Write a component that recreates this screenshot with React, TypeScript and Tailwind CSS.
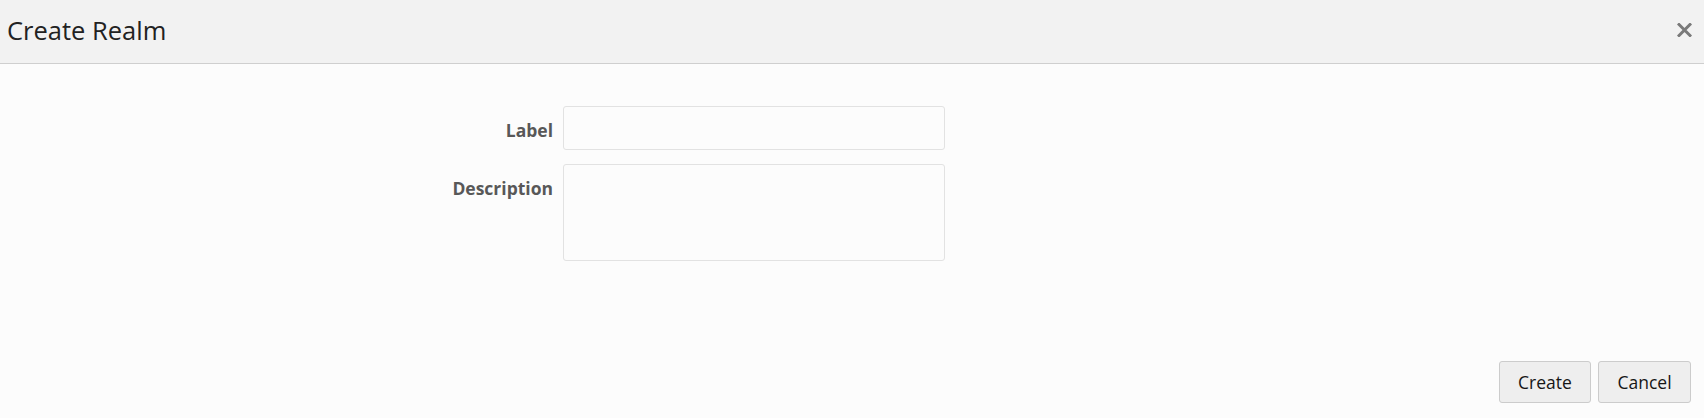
import React, {useState} from 'react';

const App: React.FC = () => {
    const [label, setLabel] = useState('');
    const [description, setDescription] = useState('');

    return (
        <div
            className="flex flex-col h-[418px] bg-[#fcfcfc] text-[#222]"
            style={{fontFamily: '"Open Sans", "Noto Sans", sans-serif'}}
        >
            <div className="flex items-center justify-between h-[64px] bg-[#f2f2f2] border-b border-[#cfcfcf] pl-[7px] pr-[12px]">
                <h1 className="text-[25.5px] leading-none text-[#222] -mt-[2px]">Create Realm</h1>
                <button className="flex items-center justify-center w-[16px] h-[16px] -mt-[3px]">
                    <svg width="15" height="14" viewBox="0 0 15 14">
                        <path d="M2 1.5 L13 12.5 M13 1.5 L2 12.5" stroke="#7a7a7a" strokeWidth="3" strokeLinecap="square" />
                    </svg>
                </button>
            </div>

            <div className="flex flex-col gap-[14px] pt-[42px] pl-[423px]">
                <div className="flex gap-[10px]">
                    <label className="w-[130px] text-right text-[17.5px] font-bold text-[#585858] leading-6 pt-[12px]">
                        Label
                    </label>
                    <input
                        type="text"
                        value={label}
                        onChange={(e) => setLabel(e.target.value)}
                        className="w-[382px] h-[44px] bg-[#fcfcfc] border border-[#e2e2e2] rounded-[3px] outline-none px-2"
                    />
                </div>
                <div className="flex gap-[10px]">
                    <label className="w-[130px] text-right text-[17.5px] font-bold text-[#585858] leading-6 pt-[12px]">
                        Description
                    </label>
                    <textarea
                        value={description}
                        onChange={(e) => setDescription(e.target.value)}
                        className="w-[382px] h-[97px] bg-[#fcfcfc] border border-[#e2e2e2] rounded-[3px] outline-none px-2 resize-none"
                    />
                </div>
            </div>

            <div className="mt-auto flex justify-end gap-[7px] pr-[13px] pb-[15px]">
                <button className="w-[92px] h-[42px] bg-[#eeeeee] border border-[#cccccc] rounded-[3px] text-[17.5px] text-[#161616]">
                    Create
                </button>
                <button className="w-[93px] h-[42px] bg-[#eeeeee] border border-[#cccccc] rounded-[3px] text-[17.5px] text-[#161616]">
                    Cancel
                </button>
            </div>
        </div>
    );
};

export default App;
